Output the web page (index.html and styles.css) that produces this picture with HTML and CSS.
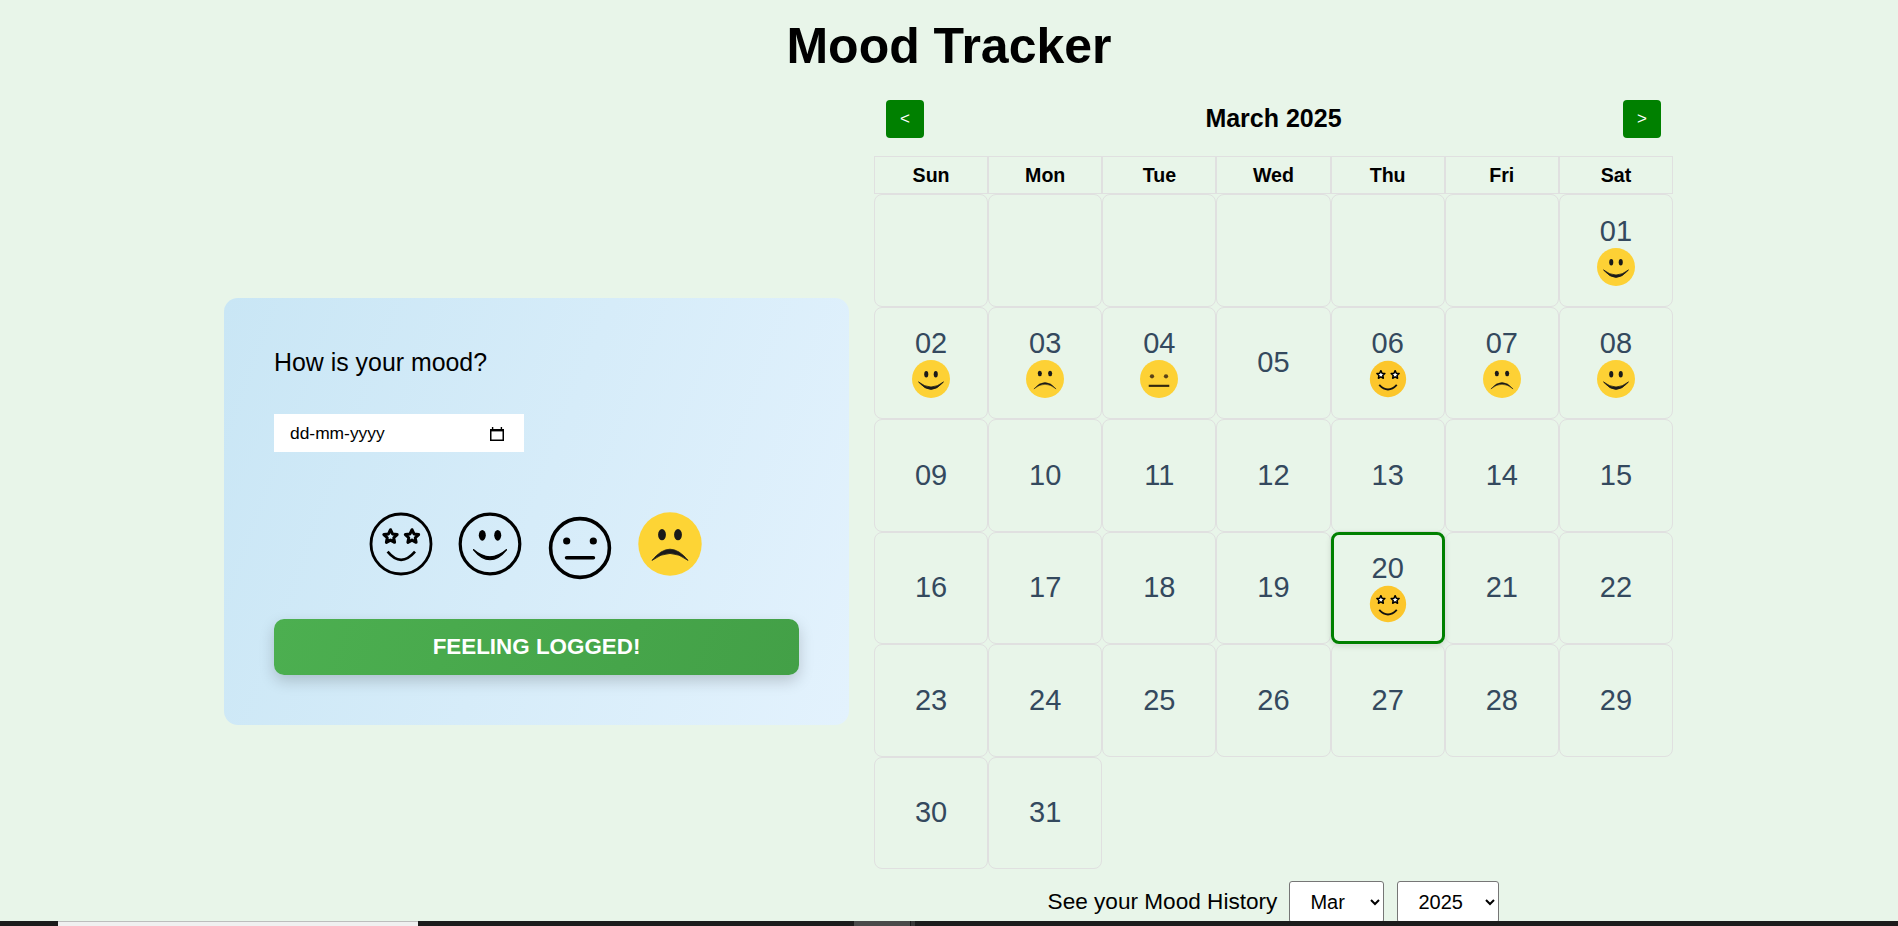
FILE: index.html

```html
<!DOCTYPE html>
<html lang="en">
<head>
  <meta charset="UTF-8">
  <meta name="viewport" content="width=device-width, initial-scale=1">
  <title>Mood Tracker</title>
  <link rel="stylesheet" href="styles.css">
</head>
<body>

<svg class="defs" aria-hidden="true">
  <defs>
    <path id="star" d="M0 -7L2 -2.75L6.66 -2.16L3.23 1.05L4.11 5.66L0 3.4L-4.11 5.66L-3.23 1.05L-6.66 -2.16L-2 -2.75Z"/>

    <symbol id="cal-smile" viewBox="-32 -32 64 64">
      <circle r="32" fill="#fdd135"/>
      <ellipse cx="-8" cy="-8" rx="3.4" ry="5.4" fill="#1a1a1a"/>
      <ellipse cx="8" cy="-8" rx="3.4" ry="5.4" fill="#1a1a1a"/>
      <path d="M-21 5Q0 30 21 5Q0 22 -21 5Z" fill="#1a1a1a" stroke="#1a1a1a" stroke-width="1.4"/>
    </symbol>
    <symbol id="cal-sad" viewBox="-32 -32 64 64">
      <circle r="32" fill="#fdd135"/>
      <ellipse cx="-8.7" cy="-9.2" rx="3.4" ry="4.6" fill="#1a1a1a"/>
      <ellipse cx="8.7" cy="-9.2" rx="3.4" ry="4.6" fill="#1a1a1a"/>
      <path d="M-18.7 16.7Q0 -5 18.7 16.7Q0 1 -18.7 16.7Z" fill="#1a1a1a" stroke="#1a1a1a" stroke-width=".8"/>
    </symbol>
    <symbol id="cal-neutral" viewBox="-32 -32 64 64">
      <circle r="32" fill="#fdd135"/>
      <circle cx="-11.8" cy="-4.6" r="3.6" fill="#5a4218"/>
      <circle cx="11.8" cy="-4.6" r="3.6" fill="#5a4218"/>
      <path d="M-17.3 11.5H17.3" stroke="#33280e" stroke-width="3.6"/>
    </symbol>
    <symbol id="cal-star" viewBox="-32 -32 64 64">
      <circle r="30.6" fill="#fcc62b"/>
      <use href="#star" x="-12" y="-7" fill="#fff" stroke="#000" stroke-width="2.6" stroke-linejoin="round"/>
      <use href="#star" x="12" y="-7" fill="#fff" stroke="#000" stroke-width="2.6" stroke-linejoin="round"/>
      <path d="M-14.8 10Q0 25.6 14.8 10" fill="none" stroke="#111" stroke-width="3.2"/>
    </symbol>
  </defs>
</svg>

<h1 class="page-title">Mood Tracker</h1>

<main class="layout">

  <section class="mood-card">
    <p class="mood-question">How is your mood?</p>

    <label class="date-field">
      <input class="date-text" type="text" placeholder="dd-mm-yyyy" aria-label="Date">
      <svg class="date-icon" viewBox="0 0 14 14" aria-hidden="true">
        <path d="M.75 2.75H13.25V13.25H.75Z" fill="none" stroke="#000" stroke-width="1.5"/>
        <path d="M0 2H14V4.4H0Z" fill="#000"/>
        <path d="M2.6 0V2.5M11.4 0V2.5" stroke="#000" stroke-width="1.4"/>
      </svg>
    </label>

    <div class="mood-row">
      <svg class="mood-face" viewBox="-32 -32 64 64" role="img" aria-label="Amazing">
        <circle r="30" fill="none" stroke="#000" stroke-width="2.8"/>
        <use href="#star" x="-10.5" y="-7.3" fill="none" stroke="#000" stroke-width="3" stroke-linejoin="round"/>
        <use href="#star" x="11" y="-7.3" fill="none" stroke="#000" stroke-width="3" stroke-linejoin="round"/>
        <path d="M-13.4 7.7Q0 24 14 7.7" fill="none" stroke="#000" stroke-width="2.6"/>
      </svg>
      <svg class="mood-face mood-face-smile" viewBox="-32 -32 64 64" role="img" aria-label="Happy">
        <circle r="29.8" fill="none" stroke="#000" stroke-width="3.2"/>
        <ellipse cx="-7.7" cy="-8.7" rx="3.5" ry="5.4"/>
        <ellipse cx="7.7" cy="-8.7" rx="3.5" ry="5.4"/>
        <path d="M-16.7 5.5Q0 26 16.7 5.5Q0 20 -16.7 5.5Z" stroke="#000" stroke-width="1.2"/>
      </svg>
      <svg class="mood-face mood-face-low" viewBox="-32 -32 64 64" role="img" aria-label="Neutral">
        <circle r="29.4" fill="none" stroke="#000" stroke-width="3.6"/>
        <circle cx="-13.3" cy="-7" r="3.6"/>
        <circle cx="13.3" cy="-7" r="3.6"/>
        <path d="M-13.4 9.7H13.4" stroke="#000" stroke-width="3.6" stroke-linecap="round"/>
      </svg>
      <svg class="mood-face" viewBox="-32 -32 64 64" role="img" aria-label="Sad">
        <circle r="31.7" fill="#fdd435"/>
        <ellipse cx="-8" cy="-9.3" rx="3.9" ry="5.6" fill="#1a1a1a"/>
        <ellipse cx="8" cy="-9.3" rx="3.9" ry="5.6" fill="#1a1a1a"/>
        <path d="M-18 16.4Q0 -6 18 16.4Q0 2.5 -18 16.4Z" fill="#1a1a1a" stroke="#1a1a1a" stroke-width=".8"/>
      </svg>
    </div>

    <button class="log-button" type="button">FEELING LOGGED!</button>
  </section>

  <section class="calendar">
    <div class="cal-header">
      <button class="cal-nav" type="button">&lt;</button>
      <h2 class="cal-title">March 2025</h2>
      <button class="cal-nav" type="button">&gt;</button>
    </div>

    <div class="cal-grid">
      <div class="cal-day-name">Sun</div>
      <div class="cal-day-name">Mon</div>
      <div class="cal-day-name">Tue</div>
      <div class="cal-day-name">Wed</div>
      <div class="cal-day-name">Thu</div>
      <div class="cal-day-name">Fri</div>
      <div class="cal-day-name">Sat</div>

      <div class="cal-cell"></div>
      <div class="cal-cell"></div>
      <div class="cal-cell"></div>
      <div class="cal-cell"></div>
      <div class="cal-cell"></div>
      <div class="cal-cell"></div>
      <div class="cal-cell">01<svg class="cal-face"><use href="#cal-smile"/></svg></div>

      <div class="cal-cell">02<svg class="cal-face"><use href="#cal-smile"/></svg></div>
      <div class="cal-cell">03<svg class="cal-face"><use href="#cal-sad"/></svg></div>
      <div class="cal-cell">04<svg class="cal-face"><use href="#cal-neutral"/></svg></div>
      <div class="cal-cell">05</div>
      <div class="cal-cell">06<svg class="cal-face"><use href="#cal-star"/></svg></div>
      <div class="cal-cell">07<svg class="cal-face"><use href="#cal-sad"/></svg></div>
      <div class="cal-cell">08<svg class="cal-face"><use href="#cal-smile"/></svg></div>

      <div class="cal-cell">09</div>
      <div class="cal-cell">10</div>
      <div class="cal-cell">11</div>
      <div class="cal-cell">12</div>
      <div class="cal-cell">13</div>
      <div class="cal-cell">14</div>
      <div class="cal-cell">15</div>

      <div class="cal-cell">16</div>
      <div class="cal-cell">17</div>
      <div class="cal-cell">18</div>
      <div class="cal-cell">19</div>
      <div class="cal-cell cal-today">20<svg class="cal-face"><use href="#cal-star"/></svg></div>
      <div class="cal-cell">21</div>
      <div class="cal-cell">22</div>

      <div class="cal-cell">23</div>
      <div class="cal-cell">24</div>
      <div class="cal-cell">25</div>
      <div class="cal-cell">26</div>
      <div class="cal-cell">27</div>
      <div class="cal-cell">28</div>
      <div class="cal-cell">29</div>

      <div class="cal-cell">30</div>
      <div class="cal-cell">31</div>
    </div>

    <div class="history">
      <span class="history-label">See your Mood History</span>
      <select class="history-select history-month">
        <option>Jan</option>
        <option>Feb</option>
        <option selected>Mar</option>
        <option>Apr</option>
      </select>
      <select class="history-select history-year">
        <option>2024</option>
        <option selected>2025</option>
      </select>
    </div>
  </section>

</main>

<div class="window-strip">
  <span class="strip-tab"></span>
  <span class="strip-thumb"></span>
  <span class="strip-end"></span>
</div>

</body>
</html>
```

FILE: styles.css

```css
html, body { height: 100%; overflow: hidden; }
body {
  margin: 0;
  background: #e8f5e9;
  color: #000;
  font-family: "Liberation Sans", Arial, sans-serif;
}

.defs { display: block; width: 0; height: 0; }

.page-title {
  margin: 0;
  padding-top: 16px;
  height: 84px;
  box-sizing: border-box;
  font-size: 50px;
  line-height: 60px;
  font-weight: bold;
  text-align: center;
}

.layout {
  display: flex;
  justify-content: center;
  align-items: center;
  gap: 25px;
  padding: 16px 1px 0 0;
}

/* left card */
.mood-card {
  width: 625px;
  height: 427px;
  box-sizing: border-box;
  padding: 50px;
  border-radius: 14px;
  background: linear-gradient(110deg, #c9e6f5, #e3f2fd);
}
.mood-question {
  margin: 0 0 37px;
  font-size: 24.9px;
  line-height: 29px;
}
.date-field {
  display: flex;
  align-items: center;
  width: 250px;
  height: 38px;
  box-sizing: border-box;
  padding: 0 20px 0 16px;
  background: #fff;
}
.date-text {
  flex: 1;
  min-width: 0;
  padding: 0;
  border: 0;
  outline: 0;
  background: transparent;
  font-family: inherit;
  font-size: 17.4px;
}
.date-text::placeholder { color: #000; opacity: 1; }
.date-icon { width: 14px; height: 14px; margin-top: 2px; }

.mood-row {
  display: flex;
  justify-content: center;
  align-items: flex-start;
  gap: 26px;
  height: 68px;
  margin: 60px 0 39px;
  padding-right: 2px;
}
.mood-face { width: 64px; height: 64px; }
.mood-face-smile { margin: 0 0 0 -1px; }
.mood-face-low { margin-top: 4px; }

.log-button {
  display: block;
  width: 100%;
  height: 56px;
  border: 0;
  border-radius: 10px;
  background: linear-gradient(110deg, #4caf50, #43a047);
  box-shadow: 0 6px 15px rgba(0, 0, 0, .18);
  color: #fff;
  font-family: inherit;
  font-size: 22.4px;
  font-weight: bold;
}

/* calendar */
.calendar { width: 799px; }
.cal-header {
  display: flex;
  justify-content: space-between;
  align-items: center;
  padding: 0 12px;
  height: 38px;
  margin-bottom: 18px;
}
.cal-nav {
  width: 38px;
  height: 38px;
  padding: 0 0 1px;
  border: 0;
  border-radius: 4px;
  background: #008000;
  color: #fff;
  font-family: inherit;
  font-size: 17px;
}
.cal-title {
  margin: 0 0 2px;
  font-size: 25px;
  font-weight: bold;
}

.cal-grid {
  display: grid;
  grid-template-columns: repeat(7, 1fr);
  grid-template-rows: 38px repeat(6, 112.5px);
}
.cal-day-name {
  display: flex;
  justify-content: center;
  align-items: center;
  border: 1px solid #e0e0e0;
  font-size: 19.6px;
  font-weight: bold;
}
.cal-cell {
  display: flex;
  flex-direction: column;
  justify-content: center;
  align-items: center;
  border: 1px solid #e0e0e0;
  border-radius: 8px;
  color: #34495e;
  font-size: 29px;
}
.cal-today {
  border: 3px solid #008000;
  box-shadow: 0 2px 6px rgba(0, 0, 0, .12);
}
.cal-face { display: block; width: 38px; height: 38px; }

.history {
  display: flex;
  justify-content: center;
  align-items: center;
  gap: 12px;
  margin-top: 12px;
}
.history-label { font-size: 22.6px; }
.history-select {
  height: 42px;
  padding: 0 8px 0 16px;
  border: 1px solid #767676;
  border-radius: 3px;
  background: #fff;
  font-family: inherit;
  font-size: 20px;
}
.history-month { width: 95px; }
.history-year { width: 102px; margin-left: 1px; }

/* dark strip along the bottom edge of the window */
.window-strip {
  position: fixed;
  left: 0;
  right: 0;
  bottom: 0;
  display: flex;
  height: 5px;
  background: #1c1c1c;
}
.strip-tab {
  width: 360px;
  margin-left: 58px;
  border-top: 1px solid #bdbdbd;
  background: #f0f0f0;
}
.strip-thumb {
  width: 56px;
  margin-left: 436px;
  background: #4a4a4a;
}
.strip-end {
  width: 4px;
  margin-left: 1px;
  background: #383838;
}
```
